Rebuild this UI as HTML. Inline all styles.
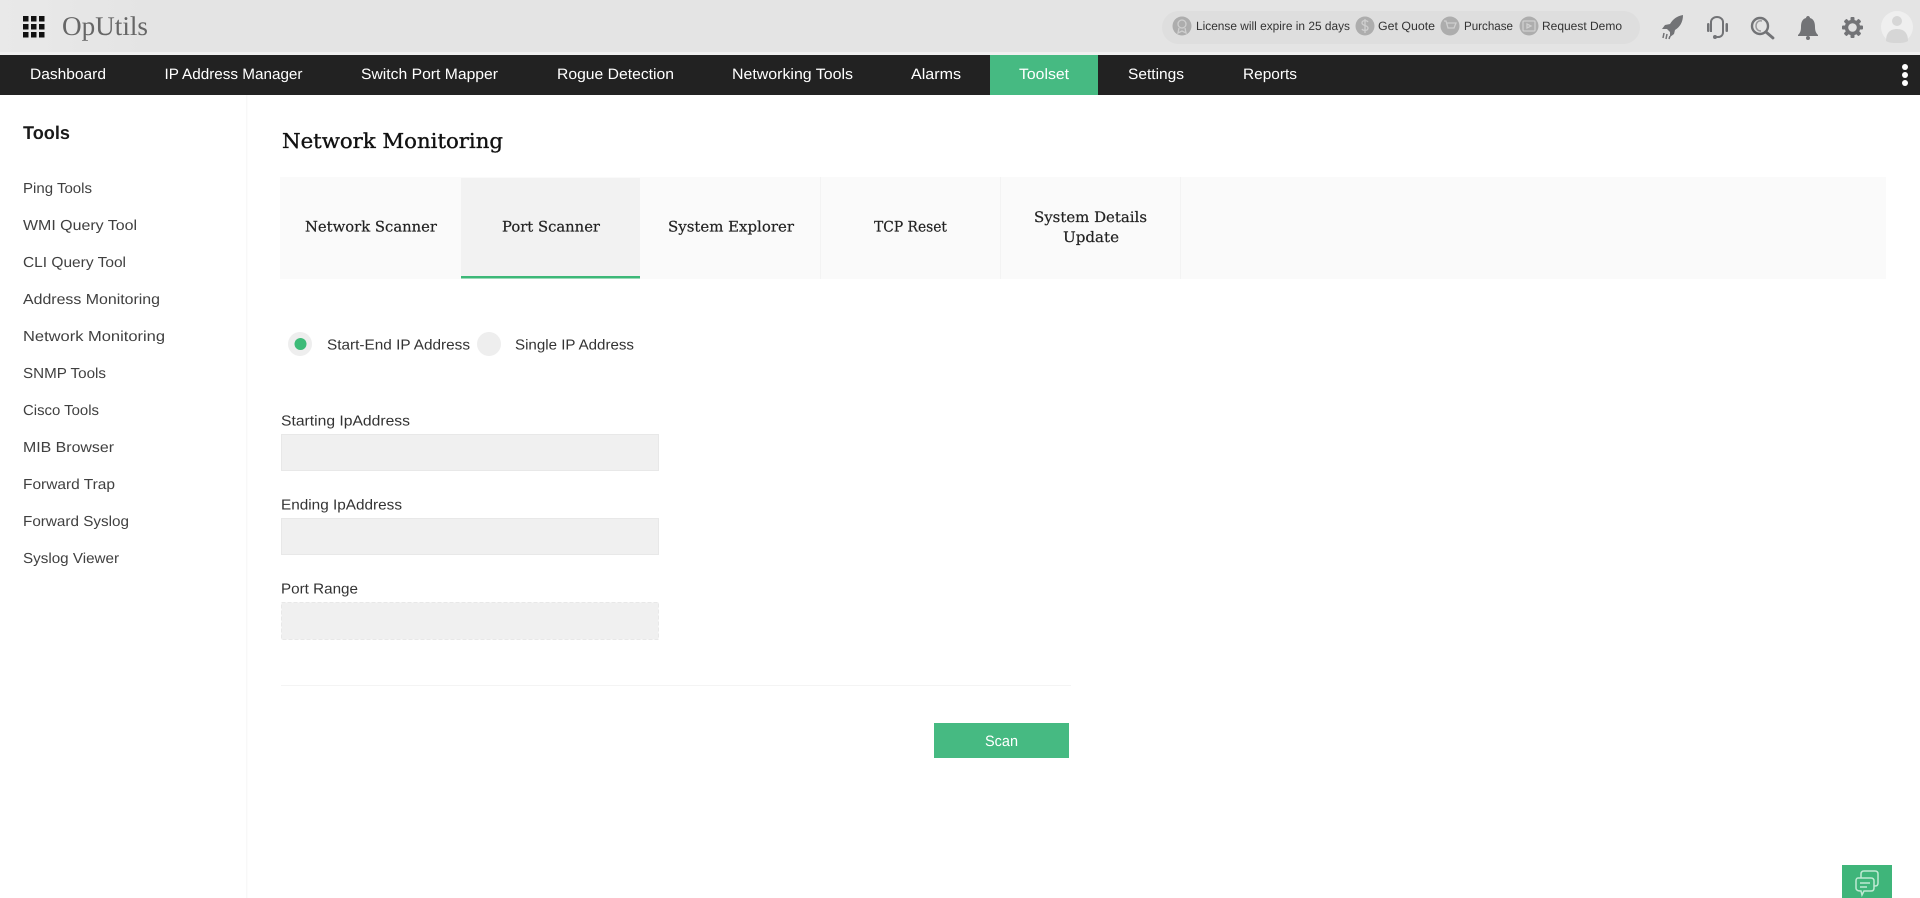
<!DOCTYPE html>
<html lang="en"><head><meta charset="utf-8"><title>OpUtils - Network Monitoring</title>
<style>
html,body{margin:0;padding:0;width:1920px;height:898px;overflow:hidden;background:#fff}
svg{display:block}
.s{font-family:"Liberation Sans",sans-serif}
.n{font-size:15px;fill:#fff}
.t{font-size:14.5px;fill:#404040}
.l{font-size:14.5px;fill:#333}
.p{font-size:12px;fill:#333}
.b{font-family:"DejaVu Serif","Liberation Serif",serif;font-size:14.5px;fill:#222;stroke:#222;stroke-width:.2px}
.i{fill:#727376}
</style></head><body>
<svg width="1920" height="898" viewBox="0 0 1920 898" xmlns="http://www.w3.org/2000/svg" text-rendering="geometricPrecision">
<defs><linearGradient id="h" x1="0" x2="1" y1="0" y2="0"><stop offset="0" stop-color="#e9e9e9"/><stop offset=".08" stop-color="#e4e4e4"/><stop offset="1" stop-color="#e4e4e4"/></linearGradient></defs>
<!-- header -->
<rect width="1920" height="53" fill="url(#h)"/><rect y="52" width="1920" height="3" fill="#f0f0f0"/>
<g fill="#111"><rect x="23" y="16" width="5.500" height="5.500"/><rect x="31" y="16" width="5.500" height="5.500"/><rect x="39" y="16" width="5.500" height="5.500"/><rect x="23" y="24" width="5.500" height="5.500"/><rect x="31" y="24" width="5.500" height="5.500"/><rect x="39" y="24" width="5.500" height="5.500"/><rect x="23" y="32" width="5.500" height="5.500"/><rect x="31" y="32" width="5.500" height="5.500"/><rect x="39" y="32" width="5.500" height="5.500"/></g>
<text x="62" y="35" font-family="Liberation Serif,serif" font-size="27" fill="#666" textLength="86" lengthAdjust="spacingAndGlyphs">OpUtils</text>
<!-- pill -->
<rect x="1162" y="11" width="478" height="33" rx="16.5" fill="#dedede"/>
<g fill="#adadad"><circle cx="1182" cy="26" r="9.5"/><circle cx="1365" cy="26" r="9.5"/><circle cx="1450" cy="26" r="9.5"/><circle cx="1529" cy="26" r="9.5"/></g>
<g fill="none" stroke="#cfcfcf" stroke-width="1.3"><circle cx="1182" cy="24" r="4"/><path d="M1179 28l-1 5 4-2 4 2-1-5"/><path d="M1368 22c-1-2-6-2-6 1s6 2 6 5-5 3-6 1M1365 19v14"/><path d="M1444 21h2l2 7h6l2-5h-9"/><rect x="1523" y="21" width="12" height="10" rx="1"/><path d="M1527 24l4 2-4 2z"/></g>
<g class="s p"><text x="1196" y="30" textLength="154" lengthAdjust="spacingAndGlyphs">License will expire in 25 days</text><text x="1378" y="30" textLength="57" lengthAdjust="spacingAndGlyphs">Get Quote</text><text x="1464" y="30" textLength="49" lengthAdjust="spacingAndGlyphs">Purchase</text><text x="1542" y="30" textLength="80" lengthAdjust="spacingAndGlyphs">Request Demo</text></g>
<!-- header icons -->
<path class="i" d="M1683 15c-6 1-10 4-13 9l-5 1-3 4 5 0 3 3 0 5 4-3 1-4c5-3 8-8 8-15z"/>
<path fill="none" stroke="#727376" stroke-width="1.500" d="M1664 33l-1 5M1667 34l-1 5M1670 36l-1 3"/>
<path fill="none" stroke="#727376" stroke-width="2" d="M1711 32v-10c0-3 3-5 6-5s6 2 6 5v10c0 3-2 5-5 5h-3"/>
<g class="i"><rect x="1707" y="23" width="2.500" height="9" rx="1.250"/><rect x="1725.500" y="23" width="2.500" height="9" rx="1.250"/><circle cx="1715" cy="37" r="2"/></g>
<circle cx="1760" cy="26" r="8" fill="none" stroke="#727376" stroke-width="2.400"/><path fill="none" stroke="#9a9a9c" stroke-width="1.500" d="M1762 21c-4-1-6 2-6 5s2 5 5 5"/><path fill="none" stroke="#727376" stroke-width="2.800" stroke-linecap="round" d="M1766 32l7 6"/>
<path class="i" d="M1808 16c1 0 2 1 2 2 4 1 5 5 5 9 0 4 1 6 3 8v1h-20v-1c2-2 3-4 3-8 0-4 1-8 5-9 0-1 1-2 2-2z"/><circle class="i" cx="1808" cy="38" r="2"/>
<g fill="#727376"><rect x="1850.500" y="17" width="4" height="21" rx="1"/><rect x="1842" y="25.500" width="21" height="4" rx="1"/><rect x="1850.500" y="17" width="4" height="21" rx="1" transform="rotate(45 1852.5 27.5)"/><rect x="1850.500" y="17" width="4" height="21" rx="1" transform="rotate(-45 1852.5 27.5)"/></g>
<circle cx="1852.500" cy="27.500" r="6" fill="none" stroke="#727376" stroke-width="3.500"/><circle cx="1852.500" cy="27.500" r="4.300" fill="#e0e0e0"/>
<circle cx="1897" cy="27" r="16" fill="#efefef"/><circle cx="1897" cy="21" r="5" fill="#d6d6d6"/><path fill="#d6d6d6" d="M1886 41c0-8 4-12 11-12s11 4 11 12c-3 2-7 2-11 2s-8 0-11-2z"/>
<!-- nav -->
<rect y="55" width="1920" height="40" fill="#222"/><rect x="990" y="55" width="108" height="40" fill="#46ba82"/>
<g class="s n"><text x="30" y="79" textLength="76" lengthAdjust="spacingAndGlyphs">Dashboard</text><text x="164.500" y="79" textLength="138" lengthAdjust="spacingAndGlyphs">IP Address Manager</text><text x="361" y="79" textLength="137" lengthAdjust="spacingAndGlyphs">Switch Port Mapper</text><text x="557" y="79" textLength="117" lengthAdjust="spacingAndGlyphs">Rogue Detection</text><text x="732" y="79" textLength="121" lengthAdjust="spacingAndGlyphs">Networking Tools</text><text x="911" y="79" textLength="50" lengthAdjust="spacingAndGlyphs">Alarms</text><text x="1019" y="79" textLength="50" lengthAdjust="spacingAndGlyphs">Toolset</text><text x="1128" y="79" textLength="56" lengthAdjust="spacingAndGlyphs">Settings</text><text x="1243" y="79" textLength="54" lengthAdjust="spacingAndGlyphs">Reports</text></g>
<g fill="#fff"><circle cx="1905" cy="67" r="3"/><circle cx="1905" cy="75" r="3"/><circle cx="1905" cy="83" r="3"/></g>
<!-- sidebar -->
<rect x="246" y="95" width="1.500" height="803" fill="#f8f8f8"/>
<text class="s" x="23" y="139" font-size="18.500" font-weight="bold" fill="#1a1a1a" textLength="47" lengthAdjust="spacingAndGlyphs">Tools</text>
<g class="s t"><text x="23" y="193" textLength="69" lengthAdjust="spacingAndGlyphs">Ping Tools</text><text x="23" y="230" textLength="114" lengthAdjust="spacingAndGlyphs">WMI Query Tool</text><text x="23" y="267" textLength="103" lengthAdjust="spacingAndGlyphs">CLI Query Tool</text><text x="23" y="304" textLength="137" lengthAdjust="spacingAndGlyphs">Address Monitoring</text><text x="23" y="341" textLength="142" lengthAdjust="spacingAndGlyphs">Network Monitoring</text><text x="23" y="378" textLength="83" lengthAdjust="spacingAndGlyphs">SNMP Tools</text><text x="23" y="415" textLength="76" lengthAdjust="spacingAndGlyphs">Cisco Tools</text><text x="23" y="452" textLength="91" lengthAdjust="spacingAndGlyphs">MIB Browser</text><text x="23" y="489" textLength="92" lengthAdjust="spacingAndGlyphs">Forward Trap</text><text x="23" y="526" textLength="106" lengthAdjust="spacingAndGlyphs">Forward Syslog</text><text x="23" y="563" textLength="96" lengthAdjust="spacingAndGlyphs">Syslog Viewer</text></g>
<!-- heading -->
<text x="282" y="148" font-family="DejaVu Serif,serif" font-size="20.500" fill="#111" stroke="#111" stroke-width=".35" textLength="221" lengthAdjust="spacingAndGlyphs">Network Monitoring</text>
<!-- tabs -->
<rect x="280" y="177" width="1606" height="102" fill="#fafafa"/><rect x="461" y="178" width="179" height="99" fill="#f2f2f2"/><rect x="461" y="276" width="179" height="2.500" fill="#3db878"/>
<g fill="#f3f3f3"><rect x="820" y="177" width="1" height="102"/><rect x="1000" y="177" width="1" height="102"/><rect x="1180" y="177" width="1" height="102"/></g>
<g class="b"><text x="305" y="231.500" textLength="132" lengthAdjust="spacingAndGlyphs">Network Scanner</text><text x="502" y="231.500" textLength="98" lengthAdjust="spacingAndGlyphs">Port Scanner</text><text x="668" y="231.500" textLength="126" lengthAdjust="spacingAndGlyphs">System Explorer</text><text x="874" y="231.500" textLength="73" lengthAdjust="spacingAndGlyphs">TCP Reset</text><text x="1034" y="222" textLength="113" lengthAdjust="spacingAndGlyphs">System Details</text><text x="1063" y="242" textLength="56" lengthAdjust="spacingAndGlyphs">Update</text></g>
<!-- radios -->
<circle cx="300" cy="344" r="12" fill="#eeeeee"/><circle cx="300.500" cy="344" r="6" fill="#3dbb78"/><circle cx="489" cy="344" r="12" fill="#eeeeee"/>
<g class="s l"><text x="327" y="349.500" textLength="143" lengthAdjust="spacingAndGlyphs">Start-End IP Address</text><text x="515" y="349.500" textLength="119" lengthAdjust="spacingAndGlyphs">Single IP Address</text></g>
<!-- form -->
<g class="s l"><text x="281" y="425.500" textLength="129" lengthAdjust="spacingAndGlyphs">Starting IpAddress</text><text x="281" y="509.500" textLength="121" lengthAdjust="spacingAndGlyphs">Ending IpAddress</text><text x="281" y="593.500" textLength="77" lengthAdjust="spacingAndGlyphs">Port Range</text></g>
<g fill="#f0f0f0" stroke="#e8e8e8"><rect x="281.500" y="434.500" width="377" height="36"/><rect x="281.500" y="518.500" width="377" height="36"/><rect x="281.500" y="602.500" width="377" height="37" stroke-dasharray="4 2"/></g>
<rect x="281" y="685" width="790" height="1" fill="#f4f4f4"/>
<!-- button -->
<rect x="934" y="723" width="135" height="35" fill="#46ba82"/>
<text class="s" x="985" y="746" font-size="15" fill="#fff" textLength="33" lengthAdjust="spacingAndGlyphs">Scan</text>
<!-- chat -->
<rect x="1842" y="865" width="50" height="33" fill="#3fb57a"/>
<g fill="none" stroke="#bfe9d3" stroke-width="1.500"><path d="M1861 878v-4c0-2 1-3 3-3h11c2 0 3 1 3 3v9c0 2-1 3-3 3h-1"/><path d="M1858 878h13c2 0 3 1 3 3v7c0 2-1 3-3 3h-7l-2 4-1-4c-3 0-5-1-5-3v-7c0-2 1-3 2-3z"/><path d="M1860 883h10M1860 887h7"/></g>
</svg>
</body></html>
